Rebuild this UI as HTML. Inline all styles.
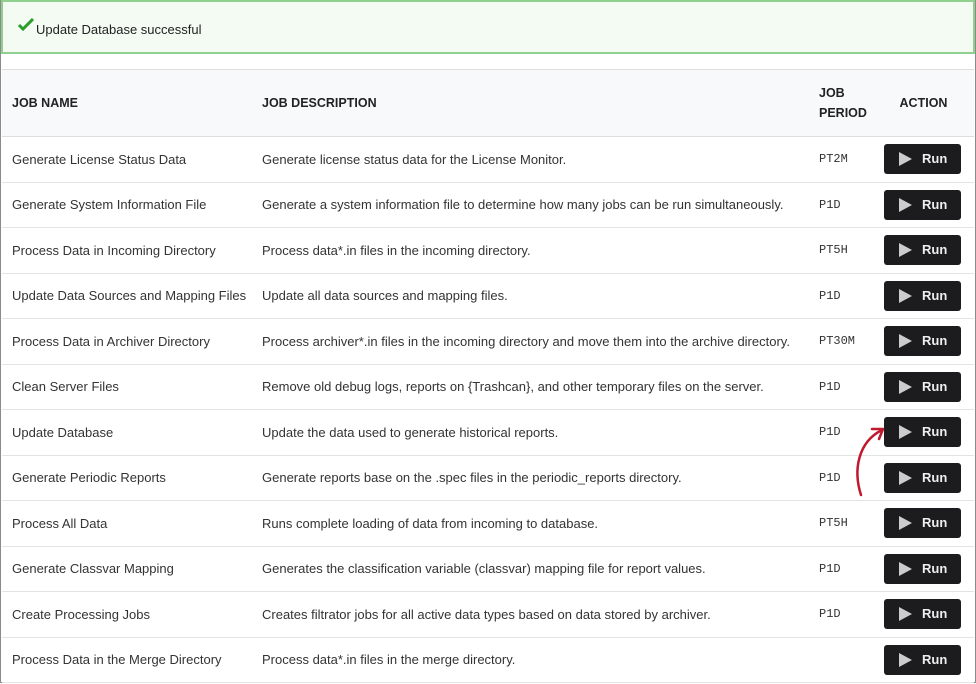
<!DOCTYPE html>
<html><head><style>
body{margin:0;width:976px;height:684px;overflow:hidden;background:#fff;font-family:"Liberation Sans",sans-serif;position:relative}
.frame{position:absolute;left:0;top:0;width:974px;height:682px;border:1px solid #8a8a8a;border-top:none}
.alert{position:absolute;left:1px;top:0;width:970px;height:50px;border:2px solid #8fd08f;background:#f3fbf3;font-size:13px;color:#222}
.alert span{position:absolute;left:33px;top:20px}
.alert svg{position:absolute;left:15px;top:16px}
table{position:absolute;left:2px;top:69px;width:972px;border-collapse:collapse;font-size:13px;color:#333;table-layout:fixed}
thead tr{background:#f8f9fb;height:67px}
th{font-weight:bold;text-align:left;font-size:12.5px;color:#222;border-top:1px solid #ddd;border-bottom:1px solid #ddd;padding:0}
td{border-bottom:1px solid #e3e3e3;height:44.5px;padding:0;white-space:nowrap}
.p{font-family:"Liberation Mono",monospace;font-size:12px;color:#333}
.a{padding-left:1px}
.btn{display:inline-block;width:77px;height:30px;background:#1c1c1e;border-radius:3px;color:#eee;font-weight:bold;font-size:13px;position:relative;vertical-align:middle}
.btn svg{position:absolute;left:14px;top:8px}
.btn b{position:absolute;left:38px;top:7px}
</style></head><body>
<div class="frame"></div>
<div class="alert"><svg width="16" height="13" viewBox="0 0 16 13"><path d="M1 7 L5 11 L15 1" stroke="#2a9d2a" stroke-width="3" fill="none"/></svg><span>Update Database successful</span></div>
<table>
<colgroup><col style="width:260px"><col style="width:557px"><col style="width:64px"><col></colgroup>
<thead><tr><th style="padding-left:10px">JOB NAME</th><th>JOB DESCRIPTION</th><th style="line-height:20px">JOB<br>PERIOD</th><th style="text-align:center;padding-right:10px">ACTION</th></tr></thead>
<tbody>
<tr><td style="padding-left:10px">Generate License Status Data</td><td>Generate license status data for the License Monitor.</td><td class="p">PT2M</td><td class="a"><span class="btn"><svg width="14" height="14"><path d="M1 0L14 7L1 14Z" fill="#ccc"/></svg><b>Run</b></span></td></tr>
<tr><td style="padding-left:10px">Generate System Information File</td><td>Generate a system information file to determine how many jobs can be run simultaneously.</td><td class="p">P1D</td><td class="a"><span class="btn"><svg width="14" height="14"><path d="M1 0L14 7L1 14Z" fill="#ccc"/></svg><b>Run</b></span></td></tr>
<tr><td style="padding-left:10px">Process Data in Incoming Directory</td><td>Process data*.in files in the incoming directory.</td><td class="p">PT5H</td><td class="a"><span class="btn"><svg width="14" height="14"><path d="M1 0L14 7L1 14Z" fill="#ccc"/></svg><b>Run</b></span></td></tr>
<tr><td style="padding-left:10px">Update Data Sources and Mapping Files</td><td>Update all data sources and mapping files.</td><td class="p">P1D</td><td class="a"><span class="btn"><svg width="14" height="14"><path d="M1 0L14 7L1 14Z" fill="#ccc"/></svg><b>Run</b></span></td></tr>
<tr><td style="padding-left:10px">Process Data in Archiver Directory</td><td>Process archiver*.in files in the incoming directory and move them into the archive directory.</td><td class="p">PT30M</td><td class="a"><span class="btn"><svg width="14" height="14"><path d="M1 0L14 7L1 14Z" fill="#ccc"/></svg><b>Run</b></span></td></tr>
<tr><td style="padding-left:10px">Clean Server Files</td><td>Remove old debug logs, reports on {Trashcan}, and other temporary files on the server.</td><td class="p">P1D</td><td class="a"><span class="btn"><svg width="14" height="14"><path d="M1 0L14 7L1 14Z" fill="#ccc"/></svg><b>Run</b></span></td></tr>
<tr><td style="padding-left:10px">Update Database</td><td>Update the data used to generate historical reports.</td><td class="p">P1D</td><td class="a"><span class="btn"><svg width="14" height="14"><path d="M1 0L14 7L1 14Z" fill="#ccc"/></svg><b>Run</b></span></td></tr>
<tr><td style="padding-left:10px">Generate Periodic Reports</td><td>Generate reports base on the .spec files in the periodic_reports directory.</td><td class="p">P1D</td><td class="a"><span class="btn"><svg width="14" height="14"><path d="M1 0L14 7L1 14Z" fill="#ccc"/></svg><b>Run</b></span></td></tr>
<tr><td style="padding-left:10px">Process All Data</td><td>Runs complete loading of data from incoming to database.</td><td class="p">PT5H</td><td class="a"><span class="btn"><svg width="14" height="14"><path d="M1 0L14 7L1 14Z" fill="#ccc"/></svg><b>Run</b></span></td></tr>
<tr><td style="padding-left:10px">Generate Classvar Mapping</td><td>Generates the classification variable (classvar) mapping file for report values.</td><td class="p">P1D</td><td class="a"><span class="btn"><svg width="14" height="14"><path d="M1 0L14 7L1 14Z" fill="#ccc"/></svg><b>Run</b></span></td></tr>
<tr><td style="padding-left:10px">Create Processing Jobs</td><td>Creates filtrator jobs for all active data types based on data stored by archiver.</td><td class="p">P1D</td><td class="a"><span class="btn"><svg width="14" height="14"><path d="M1 0L14 7L1 14Z" fill="#ccc"/></svg><b>Run</b></span></td></tr>
<tr><td style="padding-left:10px">Process Data in the Merge Directory</td><td>Process data*.in files in the merge directory.</td><td class="p"></td><td class="a"><span class="btn"><svg width="14" height="14"><path d="M1 0L14 7L1 14Z" fill="#ccc"/></svg><b>Run</b></span></td></tr>
</tbody></table>
<svg style="position:absolute;left:850px;top:420px" width="40" height="80"><path d="M11 75 C3 50 8 22 32 10" stroke="#c0182f" stroke-width="2.5" fill="none" stroke-linecap="round"/><path d="M22 9 L33 9 L29 19" stroke="#c0182f" stroke-width="2.5" fill="none" stroke-linecap="round" stroke-linejoin="round"/></svg>
</body></html>
